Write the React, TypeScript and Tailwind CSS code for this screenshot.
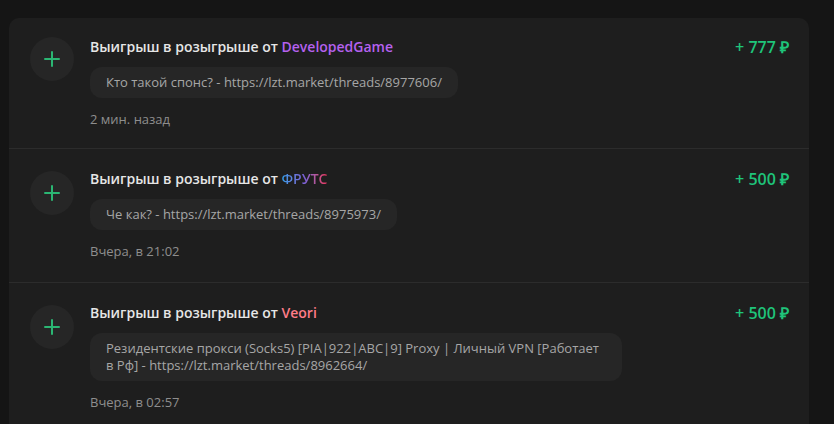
import { Plus } from "lucide-react";

type Row = {
  user: string;
  userClass: string;
  amount: string;
  text: string;
  time: string;
};

const rows: Row[] = [
  {
    user: "DevelopedGame",
    userClass: "text-[#b561ee]",
    amount: "+ 777 ₽",
    text: "Кто такой спонс? - https://lzt.market/threads/8977606/",
    time: "2 мин. назад"
  },
  {
    user: "ФРУТС",
    userClass: "bg-linear-to-r from-[#2f9ae6] via-[#7a5fd4] to-[#ea2f5c] bg-clip-text text-transparent",
    amount: "+ 500 ₽",
    text: "Че как? - https://lzt.market/threads/8975973/",
    time: "Вчера, в 21:02"
  },
  {
    user: "Veori",
    userClass: "text-[#ff7c88]",
    amount: "+ 500 ₽",
    text: "Резидентские прокси (Socks5) [PIA|922|ABC|9] Proxy | Личный VPN [Работает в Рф] - https://lzt.market/threads/8962664/",
    time: "Вчера, в 02:57"
  }
];

function PaymentRow({ row, first, last }: { row: Row; first: boolean; last: boolean }) {
  return (
    <div
      className={`flex gap-4 pl-[21px] pr-5 ${first ? "pt-[19px] pb-[20px]" : "pt-[20px] pb-[22px]"} ${last ? "" : "border-b border-[#2c2c2c]"}`}
    >
      <div
        className={`grid size-[44px] shrink-0 place-items-center rounded-full bg-[#262626] text-[#2bb673] ${first ? "" : "mt-[2px]"}`}
      >
        <Plus size={24} strokeWidth={2} />
      </div>
      <div className="min-w-0 flex-1">
        <div className="flex items-start justify-between">
          <p className="text-[14px] leading-[20px] font-semibold text-[#e6e6e6]">
            Выигрыш в розыгрыше от <span className={row.userClass}>{row.user}</span>
          </p>
          <span className="text-[16px] leading-[20px] font-semibold text-[#1fc47a]">{row.amount}</span>
        </div>
        <div className="mt-[10px] w-fit max-w-[532px] rounded-[12px] bg-[#262626] px-4 py-[7px] text-[13px] leading-[17px] text-[#a6a6a6]">
          {row.text}
        </div>
        <p className="mt-[12px] text-[13px] leading-[18px] text-[#8e8e8e]">{row.time}</p>
      </div>
    </div>
  );
}

export default function App() {
  return (
    <div className="min-h-screen overflow-hidden bg-[#151515] pl-[9px] pt-[18px] font-['Open_Sans',sans-serif]">
      <div className="w-[800px] rounded-t-[10px] bg-[#1e1e1e]">
        {rows.map((row, i) => (
          <PaymentRow key={i} row={row} first={i === 0} last={i === rows.length - 1} />
        ))}
      </div>
    </div>
  );
}
